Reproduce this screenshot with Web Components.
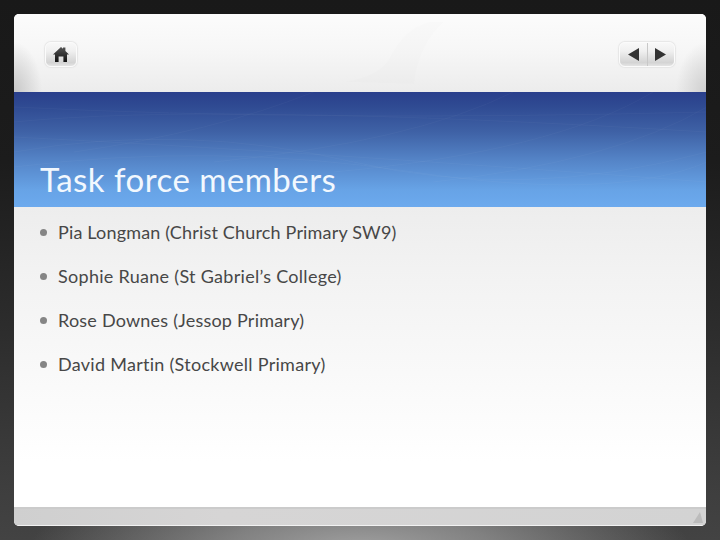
<!DOCTYPE html>
<html><head><meta charset="utf-8"><title>Task force members</title>
<style>html,body{margin:0;padding:0;background:#1a1a1a}</style></head><body>
<template id="t-stage"><style>
:host{display:block;width:720px;height:540px;box-sizing:border-box;padding:14px;overflow:hidden;
background:radial-gradient(ellipse 330px 80px at 360px 548px,#a0a0a0 0,rgba(150,150,150,.75) 40%,rgba(100,100,100,0) 100%),linear-gradient(180deg,#191919 0,#1c1c1c 30%,#2c2c2c 60%,#3e3e3e 90%,#434343 100%);font-family:"Lato","Carlito",sans-serif}
.card{height:100%;display:flex;flex-direction:column;border-radius:5px;overflow:hidden;background:#fff;box-sizing:border-box}
</style><div class="card"><slot></slot></div></template>

<template id="t-toolbar"><style>
:host{display:flex;justify-content:space-between;align-items:flex-start;height:78px;box-sizing:border-box;padding:28px 31px 0 31px;flex:none;position:relative;overflow:hidden;
background:radial-gradient(ellipse 28px 50px at 0 78px,#c8c8c8 0,rgba(215,215,215,0) 100%),radial-gradient(ellipse 30px 50px at 100% 78px,#cfcfcf 0,rgba(215,215,215,0) 100%),linear-gradient(180deg,#fcfcfc 0,#f6f6f6 50%,#ececec 100%)}
svg{position:absolute;left:0;top:0;width:100%;height:100%}
::slotted(*){position:relative}
</style><svg viewBox="0 0 692 78"><path d="M415 8Q390 14 375 45Q365 62 330 68L400 70Q405 30 430 8z" fill="#000" fill-opacity=".006"/></svg><slot name="start"></slot><slot name="end"></slot></template>

<template id="t-btn"><style>
:host{display:flex;box-sizing:border-box;height:25px;border-radius:6px;border:1px solid #fbfbfb;box-shadow:0 0 1px 1px #e6e6e6;overflow:hidden;background:linear-gradient(180deg,#f8f8f8 0,#f0f0f0 35%,#d4d4d4 85%,#e4e4e4 100%)}
::slotted(*){display:flex;align-items:center;justify-content:center}
</style><slot></slot></template>

<template id="t-banner"><style>
:host{display:flex;align-items:flex-end;flex:none;height:115px;box-sizing:border-box;padding:0 0 8px 26px;margin-right:-1px;position:relative;overflow:hidden;
background:linear-gradient(180deg,#2a3f8c 0,#2f4a92 12%,#3f62a6 35%,#5585c8 60%,#67a3e6 85%,#6caaee 100%)}
svg{position:absolute;inset:0;width:100%;height:100%}
h1{position:relative;margin:0;font-weight:400;font-size:33px;line-height:40px;color:#f2f8fe;letter-spacing:.47px}
</style><svg viewBox="0 0 694 115" preserveAspectRatio="none" fill="none" stroke="#fff" stroke-opacity=".035">
<path d="M0 60Q170 30 340 70T694 60M0 75Q200 50 400 80T694 70M0 30Q200 10 694 40M0 15Q300 30 694 20"/>
<path d="M694 15Q600 70 420 90M640 0Q540 60 320 80M500 0Q400 50 200 70M300 0Q200 40 60 60M0 45Q300 60 694 90"/></svg>
<h1><slot></slot></h1></template>

<template id="t-body"><style>
:host{display:block;flex:1;min-height:0;box-sizing:border-box;padding:3px 0 0 26px;background:linear-gradient(180deg,#ededed 0,#f3f3f3 25%,#fafafa 60%,#fff 85%)}
ul{list-style:none;margin:0;padding:0;display:flex;flex-direction:column}
</style><ul><slot></slot></ul></template>

<template id="t-item"><style>
:host{display:flex;align-items:center;height:44px;font-size:18px;color:#474747;letter-spacing:var(--ls,.22px)}
i{width:7px;height:7px;border-radius:50%;background:#858585;flex:none;margin-right:11px;margin-top:1px}
</style><i></i><span><slot></slot></span></template>

<template id="t-foot"><style>
:host{display:block;flex:none;height:16px;position:relative;border-top:2px solid #cbcbcb;border-bottom:1px solid #f2f2f2;background:linear-gradient(90deg,#cfcfcf 0,#d6d5d5 30%,#d3d3d3 100%)}
svg{position:absolute;right:2px;bottom:1px;width:12px;height:14px}
</style><svg viewBox="0 0 12 14"><path d="M1 13 8 2l3 11z" fill="#bcbcbc"/></svg></template>

<slide-stage>
<slide-toolbar>
<nav-btn slot="start" style="width:32px"><span style="width:100%"><svg width="16" height="15" viewBox="0 0 16 15"><defs><linearGradient id="h" x1="0" y1="0" x2="0" y2="1"><stop offset="0" stop-color="#555"/><stop offset="1" stop-color="#111"/></linearGradient></defs><path fill="url(#h)" d="M8 0 10 1.8V.5h2.400v3.600L16 7.500h-2V15h-3.600V9.500H5.600V15H2V7.500H0z"/></svg></span></nav-btn>
<nav-btn slot="end" style="width:56px"><span style="width:28px;border-right:1px solid #c8c8c8"><svg width="11" height="13" viewBox="0 0 11 13"><path fill="#333" d="M11 0V13L0 6.500z"/></svg></span><span style="width:27px"><svg width="11" height="13" viewBox="0 0 11 13"><path fill="#333" d="M0 0V13L11 6.500z"/></svg></span></nav-btn>
</slide-toolbar>
<slide-banner>Task force members</slide-banner>
<slide-body>
<slide-item style="--ls:.17px">Pia Longman (Christ Church Primary SW9)</slide-item>
<slide-item style="--ls:.29px">Sophie Ruane (St Gabriel’s College)</slide-item>
<slide-item>Rose Downes (Jessop Primary)</slide-item>
<slide-item style="--ls:.28px">David Martin (Stockwell Primary)</slide-item>
</slide-body>
<slide-foot></slide-foot>
</slide-stage>
<script>
for(const [n,t] of [['slide-stage','t-stage'],['slide-toolbar','t-toolbar'],['nav-btn','t-btn'],['slide-banner','t-banner'],['slide-body','t-body'],['slide-item','t-item'],['slide-foot','t-foot']]){
customElements.define(n,class extends HTMLElement{constructor(){super();this.attachShadow({mode:'open'}).appendChild(document.getElementById(t).content.cloneNode(true));}});
}
</script></body></html>
